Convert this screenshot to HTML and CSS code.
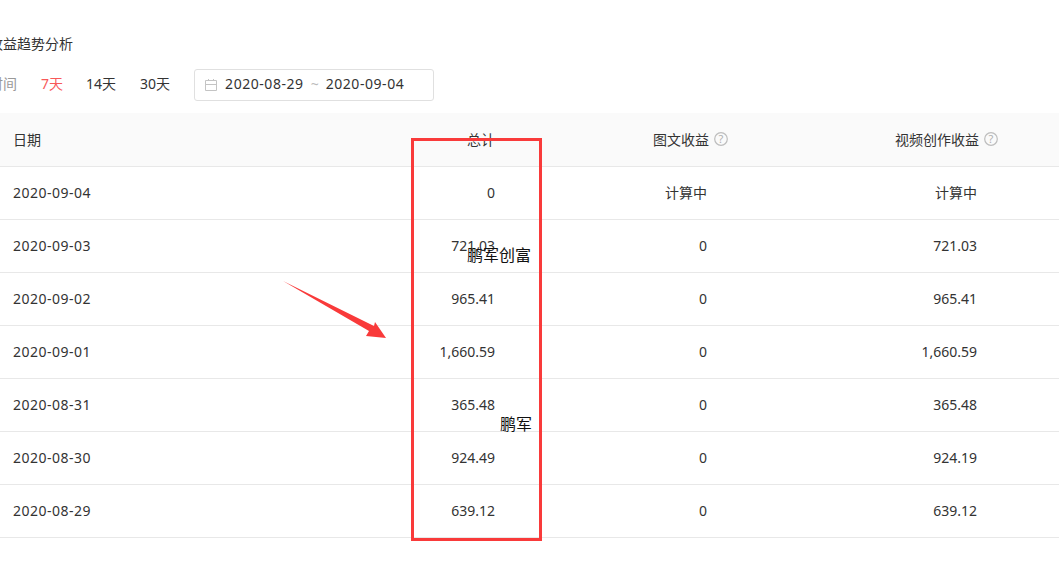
FILE: index.html
```html
<!DOCTYPE html>
<html lang="zh">
<head>
<meta charset="utf-8">
<title>收益趋势分析</title>
<link rel="stylesheet" href="styles.css">
</head>
<body>
<main class="section">
  <h2 class="title">收益趋势分析</h2>
  <div class="filters">
    <span class="filter-label">时间</span>
    <span class="range active">7天</span>
    <span class="range">14天</span>
    <span class="range">30天</span>
    <div class="picker">
      <svg class="cal" width="14" height="14" viewBox="0 0 14 14" fill="none" stroke="#c4c4c4" stroke-width="1"><path d="M1.500 2.500h11v10h-11zM1.500 6.500h11M4.500 1v2M9.500 1v2"/></svg>
      <span class="date">2020-08-29</span>
      <span class="tilde">~</span>
      <span class="date">2020-09-04</span>
    </div>
  </div>
  <table class="stats">
    <colgroup><col class="c1"><col class="c2"><col class="c3"><col class="c4"><col class="c5"></colgroup>
    <thead>
      <tr>
        <th class="left">日期</th>
        <th>总计</th>
        <th>图文收益<svg class="help" width="14" height="14" viewBox="0 0 14 14"><circle cx="7" cy="7" r="6.300" fill="none" stroke="#bdbdbd" stroke-width="1.200"/><text x="7" y="10.800" text-anchor="middle" class="help-mark">?</text></svg></th>
        <th>视频创作收益<svg class="help" width="14" height="14" viewBox="0 0 14 14"><circle cx="7" cy="7" r="6.300" fill="none" stroke="#bdbdbd" stroke-width="1.200"/><text x="7" y="10.800" text-anchor="middle" class="help-mark">?</text></svg></th>
        <th></th>
      </tr>
    </thead>
    <tbody>
      <tr><td class="left day">2020-09-04</td><td>0</td><td class="inset">计算中</td><td class="inset">计算中</td><td></td></tr>
      <tr><td class="left day">2020-09-03</td><td>721.03</td><td class="inset">0</td><td class="inset">721.03</td><td></td></tr>
      <tr><td class="left day">2020-09-02</td><td>965.41</td><td class="inset">0</td><td class="inset">965.41</td><td></td></tr>
      <tr><td class="left day">2020-09-01</td><td>1,660.59</td><td class="inset">0</td><td class="inset">1,660.59</td><td></td></tr>
      <tr><td class="left day">2020-08-31</td><td>365.48</td><td class="inset">0</td><td class="inset">365.48</td><td></td></tr>
      <tr><td class="left day">2020-08-30</td><td>924.49</td><td class="inset">0</td><td class="inset">924.19</td><td></td></tr>
      <tr><td class="left day">2020-08-29</td><td>639.12</td><td class="inset">0</td><td class="inset">639.12</td><td></td></tr>
    </tbody>
  </table>
</main>
<div class="mark-box"></div>
<svg class="arrow" width="110" height="62" viewBox="280 279 110 62"><polygon points="283,281 374,326 375,322 386,338 366,336 369,331" fill="#f93a3a"/></svg>
<span class="note note-a">鹏军创富</span>
<span class="note note-b">鹏军</span>
</body>
</html>
```
FILE: styles.css
```css
* { box-sizing: border-box; }
html, body { margin: 0; height: 100%; }
body {
  position: relative;
  overflow: hidden;
  background: #fff;
  color: #333;
  font: 14px/20px "Noto Sans", "Noto Sans CJK SC", sans-serif;
}
.section { margin-left: -11px; padding-top: 34px; width: 1070px; }
.title { margin: 0; font-size: 14px; line-height: 20px; font-weight: 400; color: #333; }
.filters { display: flex; align-items: center; margin-top: 15px; height: 32px; }
.filter-label { color: #999; margin-right: 24px; padding-bottom: 2px; }
.range { margin-right: 24px; padding-bottom: 2px; }
.range.active { color: #f85959; margin-right: 23px; }
.picker {
  display: flex; align-items: center; width: 240px; height: 32px;
  border: 1px solid #e0e0e0; border-radius: 3px; padding-left: 9px;
}
.cal { margin-right: 7px; flex: none; }
.date { letter-spacing: 0.55px; padding-bottom: 2px; }
.tilde { color: #bbb; margin: 0 7px; padding-bottom: 2px; }
.stats { margin-top: 12px; width: 1070px; table-layout: fixed; border-collapse: collapse; }
.c1 { width: 311px; } .c2 { width: 195px; } .c3 { width: 233px; } .c4 { width: 270px; } .c5 { width: 61px; }
.stats th, .stats td { height: 53px; padding: 0; text-align: right; font-weight: 400; border-bottom: 1px solid #e8e8e8; }
.stats th { padding-top: 1px; }
.stats thead tr { background: #fafafa; }
.stats .left { text-align: left; padding-left: 24px; }
.stats .day { letter-spacing: 0.5px; }
.stats td.inset { padding-right: 21px; }
.help { margin-left: 5px; vertical-align: -1px; }
.help-mark { font-size: 11px; fill: #b0b0b0; }
.mark-box { position: absolute; left: 411px; top: 138px; width: 131px; height: 403px; border: 3px solid #f93a3a; }
.arrow { position: absolute; left: 280px; top: 279px; }
.note { position: absolute; font-size: 16px; line-height: 22px; color: #111; }
.note-a { left: 467px; top: 244px; }
.note-b { left: 500px; top: 413px; }
```
